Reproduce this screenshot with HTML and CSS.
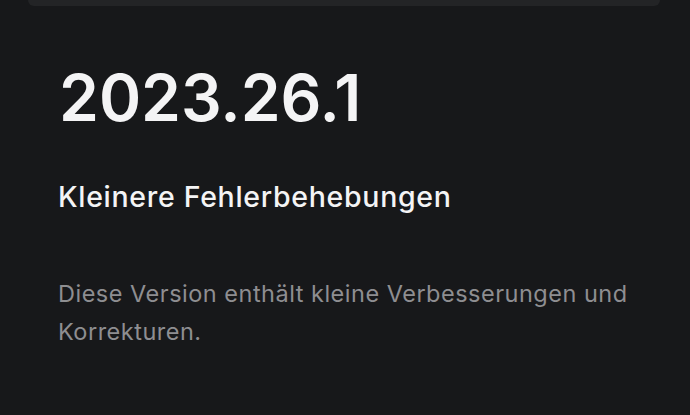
FILE: index.html
```html
<!DOCTYPE html>
<html lang="de">
<head>
<meta charset="utf-8">
<link rel="stylesheet" href="styles.css">
</head>
<body>
<div class="topcard"></div>
<main class="content">
  <h1 class="version">2023.26.1</h1>
  <h2 class="subtitle">Kleinere Fehlerbehebungen</h2>
  <p class="body">Diese Version enthält kleine Verbesserungen und Korrekturen.</p>
</main>
</body>
</html>
```

FILE: styles.css
```css
html, body {
  margin: 0;
  padding: 0;
  background: #17181a;
  width: 690px;
  height: 415px;
  overflow: hidden;
  font-family: Inter, "Noto Sans", sans-serif;
}
.topcard {
  height: 6px;
  margin: 0 30px 0 28px;
  background: #232426;
  border-radius: 0 0 12px 12px;
}
.content {
  padding: 0 30px 0 58px;
}
.version {
  margin: 47px 0 0 1px;
  font-size: 64px;
  font-weight: 600;
  color: #f4f4f5;
  line-height: 90px;
  letter-spacing: 0;
}
.subtitle {
  margin: 36px 0 0 0;
  font-size: 28.5px;
  font-weight: 500;
  color: #f4f4f5;
  line-height: 36px;
  letter-spacing: 0.7px;
}
.body {
  margin: 60px 0 0 0;
  font-size: 23.5px;
  font-weight: 400;
  color: #8e8e91;
  line-height: 38px;
  letter-spacing: 0.5px;
  max-width: 600px;
}
```
